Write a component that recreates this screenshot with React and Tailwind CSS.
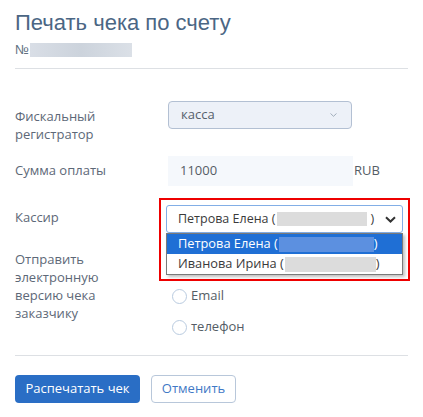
import React from "react";

const labelCls = "w-[153px] shrink-0 text-[13px] leading-[18px] text-[#5d6877]";

function Radio({ label }) {
  return (
    <label className="flex items-center h-5 gap-[4px] text-[13px] text-[#555d66]">
      <span className="w-[15px] h-[15px] rounded-full border border-[#b9cbe0] bg-white" />
      {label}
    </label>
  );
}

export default function App() {
  return (
    <div
      className="w-[423px] h-[417px] bg-white px-[15px] pt-[9px]"
      style={{ fontFamily: '"Open Sans", "Liberation Sans", sans-serif' }}
    >
      {/* Заголовок */}
      <h1
        className="text-[22px] leading-[28px] text-[#4b6684]"
        style={{ fontFamily: '"Liberation Sans", Arial, sans-serif' }}
      >
        Печать чека по счету
      </h1>
      <div className="mt-1 h-[18px] flex items-center text-[13px] text-[#60707f]">
        <span style={{ fontFamily: '"Liberation Sans", Arial, sans-serif' }}>№</span>
        <span className="ml-[1px] w-[102px] h-[14px] bg-gradient-to-r from-[#d9dee6] via-[#ccd3dc] to-[#dbe0e7]" />
      </div>
      <div className="mt-[9px] h-px bg-[#dde0e4]" />

      {/* Фискальный регистратор */}
      <div className="mt-[32px] flex">
        <div className={`${labelCls} pt-[6px]`}>
          Фискальный
          <br />
          регистратор
        </div>
        <div className="w-[184px] h-[28px] rounded-[4px] border border-[#b3c0d3] bg-[#edf1f8] flex items-center justify-between pl-[12px] pr-[14px] text-[13px] text-[#56606c]">
          касса
          <svg width="7" height="4" viewBox="0 0 7 4" fill="none">
            <path d="M0.5 0.5 L3.5 3.3 L6.5 0.5" stroke="#9aa6b4" strokeWidth="0.9" />
          </svg>
        </div>
      </div>

      {/* Сумма оплаты */}
      <div className="mt-[13px] flex">
        <div className={`${labelCls} pt-[5px]`}>Сумма оплаты</div>
        <div className="w-[185px] h-[30px] bg-[#f5f8fc] flex items-center pl-[12px] text-[13px] text-[#555d66]">
          11000
        </div>
        <div className="ml-[1px] pt-[5px] text-[13px] leading-[18px] text-[#555d66]">RUB</div>
      </div>

      {/* Кассир */}
      <div className="mt-[19px] flex">
        <div className={`${labelCls} pt-[3px]`}>Кассир</div>
        <div className="relative -ml-[2px]">
          <div className="w-[237px] h-[28px] rounded-[3px] border border-[#82aee6] bg-white flex items-center justify-between pl-[11px] pr-[6px] text-[12.5px] text-[#3a3a3a]">
            <span className="flex items-center">
              Петрова Елена (
              <span className="ml-[2px] w-[90px] h-[14px] bg-[#dcdcdc]" />
              <span className="ml-[3px]">)</span>
            </span>
            <svg width="11" height="7" viewBox="0 0 11 7" fill="none">
              <path d="M1 1.2 L5.5 5.5 L10 1.2" stroke="#333" strokeWidth="2" />
            </svg>
          </div>

          {/* Выпадающий список */}
          <div className="absolute left-0 top-[28px] w-[237px] border border-[#7a7a7a] bg-white shadow-[2px_2px_3px_rgba(0,0,0,0.25)] z-10 text-[12.8px]">
            <div className="h-5 flex items-center pl-[11px] bg-[#1f6fd5] text-white">
              Петрова Елена (
              <span className="ml-[1px] w-[95px] h-[15px] bg-[#5c90e0]" />
              <span>)</span>
            </div>
            <div className="h-5 flex items-center pl-[11px] text-[#3a3a3a]">
              Иванова Ирина (
              <span className="ml-[1px] w-[91px] h-[15px] bg-[#dcdcdc]" />
              <span>)</span>
            </div>
          </div>

          {/* Красная рамка */}
          <div className="absolute -left-[7px] -top-[7px] w-[251px] h-[83px] border-2 border-[#ee0000] z-20 pointer-events-none" />
        </div>
      </div>

      {/* Отправить электронную версию */}
      <div className="mt-[17px] flex">
        <div className={labelCls}>
          Отправить
          <br />
          электронную
          <br />
          версию чека
          <br />
          заказчику
        </div>
        <div className="pt-[36px] flex flex-col gap-[11px] ml-[4px]">
          <Radio label="Email" />
          <Radio label="телефон" />
        </div>
      </div>

      <div className="mt-[18px] h-px bg-[#dde0e4]" />

      {/* Кнопки */}
      <div className="mt-[19px] flex gap-[11px]">
        <button className="w-[125px] h-[28px] rounded-[4px] bg-[#2a6ec5] text-white text-[13px]">
          Распечатать чек
        </button>
        <button className="w-[85px] h-[28px] rounded-[4px] border border-[#b8c7da] bg-white text-[#3f79c6] text-[13px]">
          Отменить
        </button>
      </div>
    </div>
  );
}
